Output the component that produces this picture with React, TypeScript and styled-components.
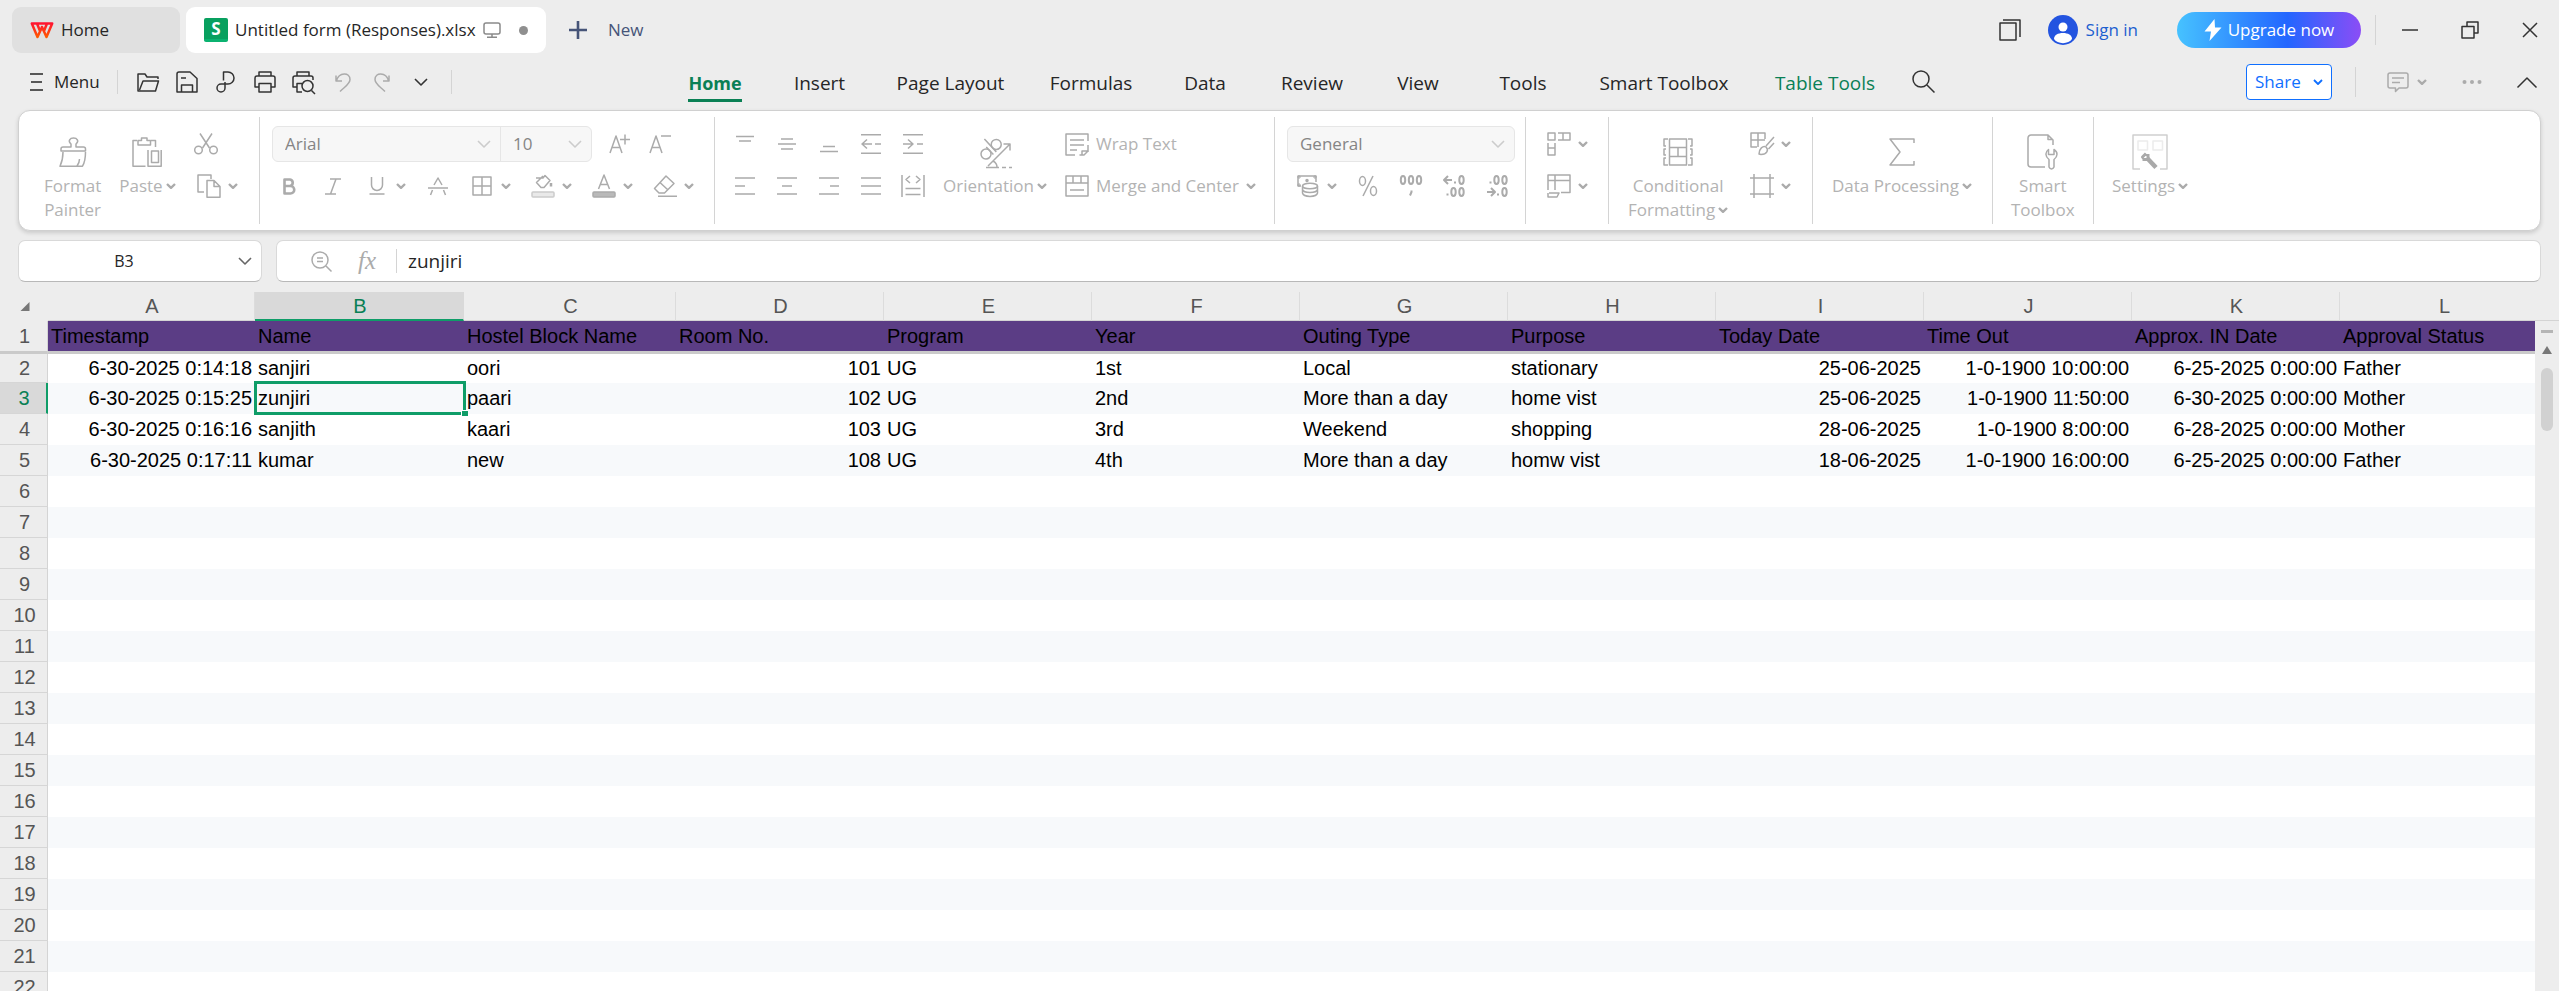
import React from "react";
import styled, { createGlobalStyle, css } from "styled-components";

const ui = `"Open Sans", "Noto Sans", sans-serif`;
const sheetFont = `"Liberation Sans", Arial, sans-serif`;

const c = {
  chrome: "#ededed",
  text: "#262626",
  faded: "#b3b3b3",
  fadedIcon: "#ababab",
  line: "#d4d4d4",
  green: "#0a8055",
  selection: "#0f9d68",
  blue: "#0f6fff",
  purple: "#5b3d85",
};

const GlobalStyle = createGlobalStyle`
  *, *::before, *::after { box-sizing: border-box; }
  body { margin: 0; background: ${c.chrome}; color: ${c.text}; font: 17px/24px ${ui}; }
  button, input, select { font: inherit; color: inherit; }
  button { border: 0; padding: 0; background: none; }
`;

/* ---------- icons ---------- */

const Drawing = styled.svg`
  display: block;
  flex: none;
  overflow: visible;
  fill: none;
  stroke: currentColor;
  stroke-linejoin: round;
`;

type IconProps = { w: number; h: number; d?: string; sw?: number; children?: React.ReactNode };
const Icon = ({ w, h, d, sw = 1.5, children }: IconProps) => (
  <Drawing width={w} height={h} viewBox={`0 0 ${w} ${h}`} strokeWidth={sw} aria-hidden="true">
    {d && <path d={d} />}
    {children}
  </Drawing>
);

const Caret = () => <Icon w={10} h={6} sw={2.4} d="M1 1L5 4.800L9 1" />;
const Chevron = () => <Icon w={14} h={8} sw={1.6} d="M1 1L7 7L13 1" />;

const icons = {
  painter: (
    <Icon w={28} h={30} d="M12 10V7C8.500 4 11 1 14.500 1S20.500 4 17 7V10H24.500A2 2 0 0 1 26.500 12V14H2V12A2 2 0 0 1 4 10ZM4 15C4 21 3 25 1 29.200H23.500C26 25 26.500 20 26.500 15M20.500 22C20.500 25 19.500 27 18 29" />
  ),
  paste: <Icon w={30} h={30} d="M5 3.500H1V29.200H13.500M19 3.500H23.500V10M6 8V3.500H9.500V1H15V3.500H18.500V8ZM16 13V29.200H29.200V13M19.500 14H26.500V25.500H19.500Z" />,
  cut: (
    <Icon w={24} h={22} d="M6 0.500L15.500 15M18 0.500L8.500 15">
      <circle cx="4.500" cy="17" r="3.800" />
      <circle cx="19.500" cy="17" r="3.800" />
    </Icon>
  ),
  copy: <Icon w={24} h={24} d="M7 18H1V1H14V5M10 6.500H17L23 12.500V23.200H10ZM17 6.500V12.500H23" />,
  grow: <Icon w={22} h={20} d="M1 19L7 2L13 19M3 13.500H11M11 5.500H21M16 0.500V10.500" />,
  shrink: <Icon w={22} h={20} d="M1 19L7 2L13 19M3 13.500H11M12 2H22" />,
  bold: <Icon w={12} h={17} sw={2.6} d="M1.500 1.500H7A3.300 3.300 0 0 1 7 8H1.500ZM1.500 8H7.500A3.700 3.700 0 0 1 7.500 15.500H1.500Z" />,
  italic: <Icon w={16} h={17} d="M5 1H16M0 16H11M11 1L5.500 16" />,
  underline: <Icon w={16} h={18} d="M2.500 0V8A5.500 5.500 0 0 0 13.500 8V0M0.500 17H15.500" />,
  strike: <Icon w={20} h={18} d="M0 11H20M6 8L10 1L14 8M4.500 13L2.500 18M15.500 13L17.500 18" />,
  borders: <Icon w={20} h={20} d="M1 1H19V19H1ZM10 1V19M1 10H19" />,
  fill: (
    <Icon w={24} h={24} d="M5 4H12L14 1.500L19 6.500L13 13.500H10L5.500 8.500L12 2">
      <path d="M20 9v3.500" strokeWidth="2.500" />
      <rect x="1" y="18" width="22" height="5" rx="1" fill="#e9e9e9" stroke="#cccccc" />
    </Icon>
  ),
  fontColor: (
    <Icon w={24} h={24} d="M6.500 15L12 1L17.500 15M8.500 10.500H15.500">
      <rect x="1" y="18" width="22" height="5" rx="1" fill="#b9b9b9" />
    </Icon>
  ),
  eraser: <Icon w={24} h={22} d="M13 1L21 8.500L11.500 18H6L1.500 13.500ZM7 7.500L15 15M5 21.200H24" />,
  alignTop: <Icon w={20} h={20} d="M1 2.500H19M4 7H16" />,
  alignMiddle: <Icon w={20} h={20} d="M4 5H16M1 10H19M4 15H16" />,
  alignBottom: <Icon w={20} h={20} d="M4 12.500H16M1 17.500H19" />,
  outdent: <Icon w={20} h={20} d="M0 0.800H20M0 19.200H20M6 5.500L1 10L6 14.500M1 10H11M14 10H20" />,
  indent: <Icon w={20} h={20} d="M0 0.800H20M0 19.200H20M5 5.500L10 10L5 14.500M0 10H10M14 10H20" />,
  alignLeft: <Icon w={20} h={18} d="M0 1H20M0 9H10M0 17H20" />,
  alignCenter: <Icon w={20} h={18} d="M0 1H20M5 9H15M0 17H20" />,
  alignRight: <Icon w={20} h={18} d="M0 1H20M11 9H20M0 17H20" />,
  justify: <Icon w={20} h={18} d="M0 1H20M0 9H20M0 17H20" />,
  distribute: <Icon w={24} h={22} d="M1 0V22M23 0V22M4.500 13.500H19.500M4.500 19.500H19.500M9 1L5 4.500L9 8M15 1L19 4.500L15 8" />,
  orientation: (
    <Icon w={34} h={34} d="M10 31L32 9M25.500 9H32V15.500M8 32.500H21M24 32.500H28M31 32.500H34M15 26C18.500 28 19 30 19 32">
      <g transform="translate(8 19) rotate(-43)">
        <circle cx="0" cy="0" r="5" />
        <path d="M5 -5V5.500M9 -12V5.500" />
        <circle cx="14" cy="0" r="5" />
      </g>
    </Icon>
  ),
  wrap: <Icon w={24} h={23} d="M10 22H1V1H23V8M23 12V19M15 22H17V18H23L19 22ZM5 7H19M5 12H19M5 17H12" />,
  merge: <Icon w={24} h={22} d="M1 1H23V21H1ZM1 8H23M8 1V8M16 1V8M5 15H19" />,
  currency: (
    <Icon w={22} h={22} d="M4 11H1V1H19V7">
      <circle cx="10" cy="5.500" r="1" fill="currentColor" />
      <path d="M1 1h2v2h-2zM17 1h2v2h-2zM1 9h2v2h-2z" strokeWidth="1" />
      <ellipse cx="13" cy="11" rx="7.500" ry="2.800" />
      <path d="M5.500 11V18C6.500 22.500 19.500 22.500 20.500 18V11M5.500 14.500C6.500 18.500 19.500 18.500 20.500 14.500" />
    </Icon>
  ),
  percent: (
    <Icon w={20} h={22} d="M15 1L5 21">
      <ellipse cx="4.500" cy="6" rx="3" ry="4.500" />
      <ellipse cx="15.500" cy="16" rx="3" ry="4.500" />
    </Icon>
  ),
  thousands: (
    <Icon w={22} h={22} d="M11.500 15.500V17L10 20.500" sw={2}>
      <ellipse cx="3" cy="5" rx="2.200" ry="4" />
      <ellipse cx="11" cy="5" rx="2.200" ry="4" />
      <ellipse cx="19" cy="5" rx="2.200" ry="4" />
    </Icon>
  ),
  addDecimal: (
    <Icon w={22} h={22} sw={2} d="M5 1L1 5L5 9M1 5H9M11 7.500H13M3.500 19.500H5.500">
      <ellipse cx="18.500" cy="5" rx="2.200" ry="4" />
      <ellipse cx="10.500" cy="17" rx="2.200" ry="4" />
      <ellipse cx="18.500" cy="17" rx="2.200" ry="4" />
    </Icon>
  ),
  dropDecimal: (
    <Icon w={22} h={22} sw={2} d="M5 13L9 17L5 21M1 17H9M11 19.500H13M3.500 7.500H5.500">
      <ellipse cx="10.500" cy="5" rx="2.200" ry="4" />
      <ellipse cx="18.500" cy="5" rx="2.200" ry="4" />
      <ellipse cx="18.500" cy="17" rx="2.200" ry="4" />
    </Icon>
  ),
  rowsCols: <Icon w={24} h={24} d="M1 1H8V8H1ZM11 1H23V8H11M16 1V8M1 11V23H8V11M1 16H8" />,
  worksheet: <Icon w={24} h={24} d="M1 16V1H23V18.500H14M1 6.500H23M8 1V16M2 19H12L10 23H1V19" />,
  conditional: <Icon w={30} h={28} d="M5 1H1V8H3M3 11H1V17H3M3 20H1V27H5M25 1H29V8H27M27 11H29V17H27M27 20H29V27H25M6.500 1H23.500V9.500H6.500ZM6.500 9.500V18.500M23.500 9.500V18.500M15 9.500V18.500M6.500 18.500H23.500V27H6.500Z" />,
  tableStyle: <Icon w={24} h={24} d="M7 15H1V1H15V7M1 8H15M8 1V15M24 5L16 14M24 11L18.500 17M9 22C9 17 13 13 16 15C19 18 17 22.500 11 22.500Z" />,
  format: <Icon w={24} h={24} d="M4 0V24M20 0V24M0 4H24M0 20H24" />,
  sigma: <Icon w={26} h={28} d="M25 5V1H1L11 14L1 27H25V23" />,
  smart: <Icon w={32} h={36} d="M18 33H4A3 3 0 0 1 1 30V4A3 3 0 0 1 4 1H21L26 6V11M21 1V5.500H26M22 33V25.500C18 22.500 18 18 21.500 15.500V20.500H27V15.500C31 18 31 22.500 27 25.500V33C26 35.500 23 35.500 22 33Z" />,
  settings: (
    <Icon w={36} h={36}>
      <path d="M8 35H1V1H35V35H28" stroke="#cfcfcf" />
      <path d="M6 7H15.500V16H6ZM21 7H30.500V16H21Z" stroke="#ececec" />
      <path d="M15 24L24 33.500" strokeWidth="4.500" stroke="#a9a9a9" />
      <path d="M14 19.500L10.500 23L13 26M16 20V25.500H10.500" strokeWidth="3" stroke="#a9a9a9" />
    </Icon>
  ),
  open: <Icon w={22} h={19} d="M21 6V4H10L8 1H1V18H18.500L21.500 8H6L2.500 17" />,
  save: <Icon w={22} h={22} d="M5 21H1V3A2 2 0 0 1 3 1H14L21 7.500V21H17M5.500 21V14H16.500V21ZM5 7H10" />,
  exportPdf: <Icon w={20} h={22} d="M7.500 9.500V1H12A6 6 0 0 1 12 13H5A4 4 0 1 0 9 17V11" />,
  print: <Icon w={22} h={22} d="M5 5V1H17V5M5 16H1V7A2 2 0 0 1 3 5H19A2 2 0 0 1 21 7V16H17M5 12.500H17V21H5Z" />,
  preview: (
    <Icon w={24} h={23} d="M5 5V1H17V5M5 16H1V7A2 2 0 0 1 3 5H19A2 2 0 0 1 21 7V9M10 12.500H5V21H10M19.500 19.500L23 23">
      <circle cx="15.500" cy="15" r="5.500" />
    </Icon>
  ),
  undo: <Icon w={16} h={20} d="M1 3.500V9H7M1.500 8.500C4 0 15 0 15 7.500C15 12 10 14.500 5 19.500" />,
  redo: <Icon w={16} h={20} d="M15 3.500V9H9M14.500 8.500C12 0 1 0 1 7.500C1 12 6 14.500 11 19.500" />,
  menu: <Icon w={13} h={18} d="M0 1H13M1 9H12M0 17H13" />,
  search: (
    <Icon w={23} h={24} d="M15 15L22.500 22.500">
      <circle cx="9" cy="9" r="8" />
    </Icon>
  ),
  stack: <Icon w={22} h={22} d="M1 4H17V21H1ZM4 1H21V18" />,
  minimise: <Icon w={16} h={16} d="M0 8H16" />,
  restore: <Icon w={18} h={18} d="M1 5.500H13V17H1ZM6 5V1H17V12H13.500" />,
  close: <Icon w={16} h={16} d="M1 1L15 15M15 1L1 15" />,
  comment: <Icon w={22} h={20} d="M3 1H19A2 2 0 0 1 21 3V14A2 2 0 0 1 19 16H12L8.500 19.500V16H3A2 2 0 0 1 1 14V3A2 2 0 0 1 3 1ZM5 6H17M5 10.500H13" />,
  more: (
    <Icon w={20} h={6}>
      <g fill="currentColor" stroke="none">
        <circle cx="2.500" cy="3" r="2" />
        <circle cx="10" cy="3" r="2" />
        <circle cx="17.500" cy="3" r="2" />
      </g>
    </Icon>
  ),
  collapse: <Icon w={20} h={11} d="M0.500 10.500L10 1L19.500 10.500" />,
  monitor: <Icon w={18} h={16} d="M3 1H15A2 2 0 0 1 17 3V10A2 2 0 0 1 15 12H3A2 2 0 0 1 1 10V3A2 2 0 0 1 3 1ZM9 12V15M4 15.200H14" />,
  plus: <Icon w={18} h={18} sw={2.6} d="M9 0V18M0 9H18" />,
  bolt: (
    <Icon w={18} h={22}>
      <path d="M10.500 0L0.500 12.500H7L5.500 22L17.500 8.500H11Z" fill="currentColor" stroke="none" />
    </Icon>
  ),
  avatar: (
    <Icon w={30} h={30}>
      <g stroke="none">
        <circle cx="15" cy="15" r="15" fill="#2354e0" />
        <circle cx="15" cy="12" r="4.500" fill="#fff" />
        <path d="M6 24C6 20 10 18 15 18S24 20 24 24C21 29.500 9 29.500 6 24Z" fill="#fff" />
      </g>
    </Icon>
  ),
  brand: (
    <Icon w={24} h={17}>
      <defs>
        <linearGradient id="brandFill" x1="0" y1="0" x2="0" y2="1">
          <stop offset="0" stopColor="#ff1430" />
          <stop offset="1" stopColor="#ff5a00" />
        </linearGradient>
      </defs>
      <path d="M1.800 1.500H22.200L16.500 15L12 5L7.500 15ZM7 1.500L10 9M17 1.500L14 9" stroke="url(#brandFill)" strokeWidth="2.500" />
    </Icon>
  ),
  zoomOut: (
    <Icon w={21} h={21} d="M15 15L20.500 20.500M6 7H12M6 10.500H12">
      <circle cx="9" cy="9" r="8" />
    </Icon>
  ),
  corner: (
    <Icon w={10} h={9}>
      <path d="M9.500 0V9H0.500Z" fill="#777" stroke="none" />
    </Icon>
  ),
  scrollUp: (
    <Icon w={10} h={8}>
      <path d="M5 0L10 8H0Z" fill="#777" stroke="none" />
    </Icon>
  ),
};

/* ---------- shell ---------- */

const Shell = styled.div`
  display: flex;
  flex-direction: column;
  height: 100vh;
  overflow: hidden;
`;

const TitleBar = styled.header`
  flex: none;
  display: flex;
  align-items: center;
  gap: 6px;
  height: 60px;
  padding: 0 21px 0 12px;
`;

const FileTab = styled.button<{ $active?: boolean; $width: number }>`
  display: flex;
  align-items: center;
  width: ${(p) => p.$width}px;
  height: 46px;
  padding: 0 18px;
  gap: 7px;
  border-radius: 9px;
  background: ${(p) => (p.$active ? "#fff" : "#e0e0e0")};
  white-space: nowrap;
  svg { color: #8a8a8a; }
`;

const SheetBadge = styled.span`
  display: flex;
  align-items: center;
  justify-content: center;
  width: 24px;
  height: 24px;
  border-radius: 2px;
  border-bottom: 3px solid #0bb270;
  background: #08a05f;
  color: #fff;
  font-weight: 700;
  line-height: 20px;
`;

const UnsavedDot = styled.span`
  width: 9px;
  height: 9px;
  margin: 0 0 0 auto;
  border-radius: 50%;
  background: #8f8f8f;
`;

const NewButton = styled.button`
  display: flex;
  align-items: center;
  gap: 21px;
  padding: 0 17px;
  color: #465478;
`;

const WindowTools = styled.div`
  display: flex;
  align-items: center;
  margin-left: auto;
`;

const SignIn = styled.button`
  display: flex;
  align-items: center;
  gap: 8px;
  margin: 0 39px 0 27px;
  color: #1d5fd0;
`;

const Upgrade = styled.button`
  display: flex;
  align-items: center;
  justify-content: center;
  gap: 6px;
  width: 184px;
  height: 36px;
  border-radius: 18px;
  background: linear-gradient(90deg, #46c2ff, #2366ff 60%, #8b4df6);
  color: #fff;
`;

const WindowButtons = styled.div`
  display: flex;
  align-items: center;
  gap: 43px;
  margin-left: 14px;
  padding-left: 26px;
  height: 30px;
  border-left: 1px solid ${c.line};
`;

const MenuBar = styled.nav`
  flex: none;
  display: grid;
  grid-template-columns: 1fr auto 1fr;
  align-items: center;
  height: 50px;
  padding-bottom: 6px;
`;

const QuickTools = styled.div`
  display: flex;
  align-items: center;
  padding-left: 30px;
`;

const MenuButton = styled.button`
  display: flex;
  align-items: center;
  gap: 11px;
  width: 87px;
  white-space: nowrap;
`;

const QuickRow = styled.div`
  display: flex;
  gap: 15px;
  padding: 0 18px;
  border: solid ${c.line};
  border-width: 0 1px;
`;

const Tabs = styled.div`
  display: flex;
`;

const Tab = styled.button<{ $width: number; $tone?: "active" | "accent" }>`
  display: flex;
  justify-content: center;
  width: ${(p) => p.$width}px;
  font-size: 19px;
  line-height: 26px;
  white-space: nowrap;
  padding-top: 8px;
  color: ${(p) => (p.$tone ? c.green : c.text)};
  ${(p) =>
    p.$tone === "active" &&
    css`
      font-size: 18px;
      font-weight: 700;
    `}
  span {
    padding-bottom: 3px;
    border-bottom: 3px solid ${(p) => (p.$tone === "active" ? c.green : "transparent")};
  }
`;

const MenuEnd = styled.div`
  display: flex;
  align-items: center;
  padding: 0 22px 0 14px;
`;

const ShareButton = styled.button`
  display: flex;
  align-items: center;
  justify-content: space-between;
  width: 86px;
  height: 36px;
  margin-left: auto;
  padding: 0 8px;
  border: 1px solid ${c.blue};
  border-radius: 4px;
  background: #fff;
  color: ${c.blue};
`;

const MenuTools = styled.div`
  display: flex;
  align-items: center;
  gap: 35px;
  height: 30px;
  margin-left: 23px;
  padding-left: 30px;
  border-left: 1px solid ${c.line};
  color: ${c.fadedIcon};
`;

/* ---------- ribbon ---------- */

const Ribbon = styled.section`
  flex: none;
  display: flex;
  height: 121px;
  margin: 0 18px;
  border: 1px solid #d0d0d0;
  border-radius: 12px;
  background: #fff;
  box-shadow: 0 2px 4px #00000026;
  color: ${c.faded};
`;

const Group = styled.div<{ $width?: number; $pad: number; $gap?: number }>`
  flex: none;
  display: flex;
  gap: ${(p) => p.$gap ?? 0}px;
  width: ${(p) => (p.$width ? `${p.$width}px` : "auto")};
  height: 107px;
  margin-top: 6px;
  padding: 9px 0 0 ${(p) => p.$pad}px;
  border-right: ${(p) => (p.$width ? `1px solid ${c.line}` : "0")};
`;

const Rows = styled.div`
  display: flex;
  flex-direction: column;
  gap: 6px;
`;

const ToolRow = styled.div<{ $gap?: number; $pad?: number }>`
  display: flex;
  align-items: center;
  gap: ${(p) => p.$gap ?? 0}px;
  height: 36px;
  padding-left: ${(p) => p.$pad ?? 0}px;
`;

const ToolButton = styled.button<{ $dim?: boolean }>`
  display: flex;
  align-items: center;
  gap: 7px;
  height: 24px;
  white-space: nowrap;
  color: ${(p) => (p.$dim ? c.fadedIcon : "#333")};
`;

const Glyph = styled.span`
  display: flex;
  align-items: center;
  justify-content: center;
  width: 24px;
`;

const LabelText = styled.span`
  color: ${c.faded};
`;

const BigButton = styled.button`
  display: flex;
  flex-direction: column;
  align-items: center;
  height: 98px;
  color: ${c.fadedIcon};
`;

const BigGlyph = styled.span`
  display: flex;
  align-items: center;
  justify-content: center;
  height: 48px;
  padding-top: 3px;
`;

const BigLabel = styled.span`
  display: flex;
  flex-direction: column;
  align-items: center;
  line-height: 24px;
  color: ${c.faded};
  white-space: nowrap;
  span {
    display: flex;
    align-items: center;
    gap: 3px;
  }
  svg { color: ${c.fadedIcon}; }
`;

const Picker = styled.div`
  display: flex;
  height: 36px;
  border: 1px solid #e6e6e6;
  border-radius: 6px;
  background: #f7f7f7;
  overflow: hidden;
`;

const PickerField = styled.label<{ $width: number }>`
  position: relative;
  display: flex;
  width: ${(p) => p.$width}px;
  & + & { border-left: 1px solid #e6e6e6; }
  select {
    flex: 1;
    appearance: none;
    border: 0;
    padding: 0 12px;
    background: transparent;
    color: #858585;
    opacity: 1;
  }
  svg {
    position: absolute;
    right: 9px;
    top: 13px;
    color: #cccccc;
  }
`;

type ToolProps = { icon: keyof typeof icons; name: string; caret?: boolean; label?: string };
const Tool = ({ icon, name, caret, label }: ToolProps) => (
  <ToolButton $dim disabled aria-label={name}>
    <Glyph>{icons[icon]}</Glyph>
    {label && <LabelText>{label}</LabelText>}
    {caret && <Caret />}
  </ToolButton>
);

type BigToolProps = { icon: keyof typeof icons; lines: string[]; caret?: boolean };
const BigTool = ({ icon, lines, caret }: BigToolProps) => (
  <BigButton disabled>
    <BigGlyph>{icons[icon]}</BigGlyph>
    <BigLabel>
      {lines.map((line, i) => (
        <span key={line}>
          {line}
          {caret && i === lines.length - 1 && <Caret />}
        </span>
      ))}
    </BigLabel>
  </BigButton>
);

/* ---------- formula bar ---------- */

const FormulaBar = styled.div`
  flex: none;
  display: flex;
  gap: 14px;
  height: 61px;
  padding: 9px 18px 10px;
`;

const Field = styled.div<{ $width?: number }>`
  ${(p) => (p.$width ? `width: ${p.$width}px;` : "flex: 1;")}
  display: flex;
  align-items: center;
  border: 1px solid #d9d9d9;
  border-bottom-color: #b8b8b8;
  border-radius: 7px;
  background: #fff;
  input {
    flex: 1;
    min-width: 0;
    height: 36px;
    border: 0;
    padding: 0 0 0 11px;
    outline: 0;
    background: none;
    font-size: 19px;
  }
`;

const NameInput = styled.input`
  && {
    padding: 0;
    text-align: center;
    font-size: 16px;
  }
`;

const NameArrow = styled.button`
  display: flex;
  justify-content: center;
  width: 32px;
  color: #666;
`;

const FormulaTools = styled.div`
  display: flex;
  align-items: center;
  gap: 26px;
  height: 24px;
  padding: 0 20px 0 34px;
  border-right: 1px solid ${c.line};
  color: ${c.fadedIcon};
`;

const FxButton = styled.button`
  font: italic 25px/24px "Liberation Serif", serif;
`;

/* ---------- grid ---------- */

const GridArea = styled.main`
  flex: 1;
  min-height: 0;
  display: flex;
  overflow: hidden;
`;

const SheetPane = styled.div`
  flex: 1;
  min-width: 0;
  overflow: hidden;
`;

const Sheet = styled.table`
  width: 0;
  min-width: 100%;
  table-layout: fixed;
  border-collapse: separate;
  border-spacing: 0;
  font: 20px/24px ${sheetFont};
  color: #000;
  th, td { white-space: nowrap; }
  th { padding: 0 0 0 2px; }
  td { padding: 0 3px 2px; }
`;

const ColumnHead = styled.th<{ $on?: boolean }>`
  height: 29px;
  font-weight: 400;
  border-bottom: ${(p) => (p.$on ? `2px solid ${c.selection}` : `1px solid ${c.line}`)};
  border-right: 1px solid ${(p) => (p.$on ? "#d9d9d9" : "#dcdcdc")};
  background: ${(p) => (p.$on ? "#d9d9d9" : c.chrome)};
  color: ${(p) => (p.$on ? c.green : "#555")};
`;

const Corner = styled.th`
  border-bottom: 1px solid ${c.chrome};
  svg { margin-left: 18px; }
`;

const RowHead = styled.th<{ $on?: boolean }>`
  font-weight: 400;
  border-bottom: 1px solid #d6d6d6;
  border-right: ${(p) => (p.$on ? `2px solid ${c.selection}` : `1px solid ${c.line}`)};
  background: ${(p) => (p.$on ? "#d9d9d9" : c.chrome)};
  color: ${(p) => (p.$on ? c.green : "#555")};
`;

const HeaderRow = styled.tr`
  height: 33px;
  td { padding-bottom: 0; background: ${c.purple}; }
  td, th { border-bottom: 3px solid #cacaca; }
`;

const Row = styled.tr<{ $first?: boolean; $band?: boolean }>`
  height: ${(p) => (p.$first ? 29 : 31)}px;
  td { background: ${(p) => (p.$band ? "#f7f9fb" : "#fff")}; }
`;

const Cell = styled.td<{ $right?: boolean }>`
  position: relative;
  text-align: ${(p) => (p.$right ? "right" : "left")};
`;

const Selection = styled.span`
  position: absolute;
  inset: -2px -2px -1px -1px;
  border: 3px solid ${c.selection};
  pointer-events: none;
  z-index: 1;
  &::after {
    content: "";
    position: absolute;
    right: -5px;
    bottom: -4px;
    width: 7px;
    height: 6px;
    border: solid #fff;
    border-width: 1px 0 0 1px;
    background: ${c.selection};
  }
`;

const ScrollRail = styled.div`
  flex: none;
  display: flex;
  flex-direction: column;
  align-items: center;
  width: 24px;
  background: ${c.chrome};
`;

const RailTop = styled.div`
  align-self: stretch;
  height: 29px;
  border-bottom: 1px solid ${c.line};
`;

const SplitHandle = styled.span`
  width: 12px;
  height: 3px;
  margin: 9px 0 13px;
  background: #b5b5b5;
`;

const Thumb = styled.span`
  width: 12px;
  height: 63px;
  margin-top: 14px;
  border-radius: 6px;
  background: #d1d1d1;
`;

/* ---------- data ---------- */

const tabs: { name: string; width: number; tone?: "active" | "accent" }[] = [
  { name: "Home", width: 107, tone: "active" },
  { name: "Insert", width: 102 },
  { name: "Page Layout", width: 160 },
  { name: "Formulas", width: 121 },
  { name: "Data", width: 107 },
  { name: "Review", width: 107 },
  { name: "View", width: 105 },
  { name: "Tools", width: 105 },
  { name: "Smart Toolbox", width: 177 },
  { name: "Table Tools", width: 145, tone: "accent" },
];

const columns: { id: string; width: number; title: string; right?: boolean }[] = [
  { id: "A", width: 207, title: "Timestamp", right: true },
  { id: "B", width: 209, title: "Name" },
  { id: "C", width: 212, title: "Hostel Block Name" },
  { id: "D", width: 208, title: "Room No.", right: true },
  { id: "E", width: 208, title: "Program" },
  { id: "F", width: 208, title: "Year" },
  { id: "G", width: 208, title: "Outing Type" },
  { id: "H", width: 208, title: "Purpose" },
  { id: "I", width: 208, title: "Today Date", right: true },
  { id: "J", width: 208, title: "Time Out", right: true },
  { id: "K", width: 208, title: "Approx. IN Date", right: true },
  { id: "L", width: 208, title: "Approval Status" },
];

const records = [
  ["6-30-2025 0:14:18", "sanjiri", "oori", "101", "UG", "1st", "Local", "stationary", "25-06-2025", "1-0-1900 10:00:00", "6-25-2025 0:00:00", "Father"],
  ["6-30-2025 0:15:25", "zunjiri", "paari", "102", "UG", "2nd", "More than a day", "home vist", "25-06-2025", "1-0-1900 11:50:00", "6-30-2025 0:00:00", "Mother"],
  ["6-30-2025 0:16:16", "sanjith", "kaari", "103", "UG", "3rd", "Weekend", "shopping", "28-06-2025", "1-0-1900 8:00:00", "6-28-2025 0:00:00", "Mother"],
  ["6-30-2025 0:17:11", "kumar", "new", "108", "UG", "4th", "More than a day", "homw vist", "18-06-2025", "1-0-1900 16:00:00", "6-25-2025 0:00:00", "Father"],
];

const rowNumbers = Array.from({ length: 21 }, (_, i) => i + 2);

const quick: { icon: keyof typeof icons; name: string; dim?: boolean }[] = [
  { icon: "open", name: "Open" },
  { icon: "save", name: "Save" },
  { icon: "exportPdf", name: "Export to PDF" },
  { icon: "print", name: "Print" },
  { icon: "preview", name: "Print preview" },
  { icon: "undo", name: "Undo", dim: true },
  { icon: "redo", name: "Redo", dim: true },
];

/* ---------- page ---------- */

const Title = () => (
  <TitleBar>
    <FileTab $width={168}>
      {icons.brand}
      Home
    </FileTab>
    <FileTab $active $width={360}>
      <SheetBadge>S</SheetBadge>
      Untitled form (Responses).xlsx
      {icons.monitor}
      <UnsavedDot />
    </FileTab>
    <NewButton>
      {icons.plus}
      New
    </NewButton>
    <WindowTools>
      <ToolButton aria-label="Open windows">{icons.stack}</ToolButton>
      <SignIn>
        {icons.avatar}
        Sign in
      </SignIn>
      <Upgrade>
        {icons.bolt}
        Upgrade now
      </Upgrade>
      <WindowButtons>
        <ToolButton aria-label="Minimise">{icons.minimise}</ToolButton>
        <ToolButton aria-label="Restore">{icons.restore}</ToolButton>
        <ToolButton aria-label="Close">{icons.close}</ToolButton>
      </WindowButtons>
    </WindowTools>
  </TitleBar>
);

const Menu = () => (
  <MenuBar>
    <QuickTools>
      <MenuButton>
        {icons.menu}
        Menu
      </MenuButton>
      <QuickRow>
        {quick.map((q) => (
          <ToolButton key={q.name} aria-label={q.name} $dim={q.dim} disabled={q.dim}>
            <Glyph>{icons[q.icon]}</Glyph>
          </ToolButton>
        ))}
        <ToolButton aria-label="More quick tools">
          <Glyph>
            <Chevron />
          </Glyph>
        </ToolButton>
      </QuickRow>
    </QuickTools>
    <Tabs>
      {tabs.map((t) => (
        <Tab key={t.name} $width={t.width} $tone={t.tone}>
          <span>{t.name}</span>
        </Tab>
      ))}
    </Tabs>
    <MenuEnd>
      <ToolButton aria-label="Search">{icons.search}</ToolButton>
      <ShareButton>
        Share
        <Icon w={10} h={6} sw={1.8} d="M1 1L5 5L9 1" />
      </ShareButton>
      <MenuTools>
        <Tool icon="comment" name="Comments" caret />
        <ToolButton $dim aria-label="More">{icons.more}</ToolButton>
        <ToolButton aria-label="Collapse ribbon">{icons.collapse}</ToolButton>
      </MenuTools>
    </MenuEnd>
  </MenuBar>
);

const HomeRibbon = () => (
  <Ribbon aria-label="Home ribbon">
    <Group $width={241} $pad={25} $gap={18}>
      <BigTool icon="painter" lines={["Format", "Painter"]} />
      <BigTool icon="paste" lines={["Paste"]} caret />
      <Rows>
        <ToolRow>
          <Tool icon="cut" name="Cut" />
        </ToolRow>
        <ToolRow $pad={3}>
          <Tool icon="copy" name="Copy" caret />
        </ToolRow>
      </Rows>
    </Group>
    <Group $width={455} $pad={12}>
      <Rows>
        <ToolRow $gap={16}>
          <Picker>
            <PickerField $width={227}>
              <select disabled aria-label="Font">
                <option>Arial</option>
              </select>
              <Chevron />
            </PickerField>
            <PickerField $width={91}>
              <select disabled aria-label="Font size">
                <option>10</option>
              </select>
              <Chevron />
            </PickerField>
          </Picker>
          <Tool icon="grow" name="Increase font size" />
          <Tool icon="shrink" name="Decrease font size" />
        </ToolRow>
        <ToolRow $gap={20} $pad={5}>
          <Tool icon="bold" name="Bold" />
          <Tool icon="italic" name="Italic" />
          <Tool icon="underline" name="Underline" caret />
          <Tool icon="strike" name="Strikethrough" />
          <Tool icon="borders" name="Borders" caret />
          <Tool icon="fill" name="Fill colour" caret />
          <Tool icon="fontColor" name="Font colour" caret />
          <Tool icon="eraser" name="Clear" caret />
        </ToolRow>
      </Rows>
    </Group>
    <Group $width={560} $pad={18} $gap={18}>
      <Rows>
        <ToolRow $gap={18}>
          <Tool icon="alignTop" name="Align top" />
          <Tool icon="alignMiddle" name="Align middle" />
          <Tool icon="alignBottom" name="Align bottom" />
          <Tool icon="outdent" name="Decrease indent" />
          <Tool icon="indent" name="Increase indent" />
        </ToolRow>
        <ToolRow $gap={18}>
          <Tool icon="alignLeft" name="Align left" />
          <Tool icon="alignCenter" name="Align centre" />
          <Tool icon="alignRight" name="Align right" />
          <Tool icon="justify" name="Justify" />
          <Tool icon="distribute" name="Distribute" />
        </ToolRow>
      </Rows>
      <BigTool icon="orientation" lines={["Orientation"]} caret />
      <Rows>
        <ToolRow>
          <Tool icon="wrap" name="Wrap Text" label="Wrap Text" />
        </ToolRow>
        <ToolRow>
          <Tool icon="merge" name="Merge and Center" label="Merge and Center" caret />
        </ToolRow>
      </Rows>
    </Group>
    <Group $width={251} $pad={12}>
      <Rows>
        <Picker>
          <PickerField $width={226}>
            <select disabled aria-label="Number format">
              <option>General</option>
            </select>
            <Chevron />
          </PickerField>
        </Picker>
        <ToolRow $gap={19} $pad={9}>
          <Tool icon="currency" name="Currency" caret />
          <Tool icon="percent" name="Percent" />
          <Tool icon="thousands" name="Thousands separator" />
          <Tool icon="addDecimal" name="Increase decimal" />
          <Tool icon="dropDecimal" name="Decrease decimal" />
        </ToolRow>
      </Rows>
    </Group>
    <Group $width={83} $pad={21}>
      <Rows>
        <ToolRow>
          <Tool icon="rowsCols" name="Rows and columns" caret />
        </ToolRow>
        <ToolRow>
          <Tool icon="worksheet" name="Worksheet" caret />
        </ToolRow>
      </Rows>
    </Group>
    <Group $width={204} $pad={19} $gap={22}>
      <BigTool icon="conditional" lines={["Conditional", "Formatting"]} caret />
      <Rows>
        <ToolRow>
          <Tool icon="tableStyle" name="Table style" caret />
        </ToolRow>
        <ToolRow>
          <Tool icon="format" name="Format" caret />
        </ToolRow>
      </Rows>
    </Group>
    <Group $width={180} $pad={19}>
      <BigTool icon="sigma" lines={["Data Processing"]} caret />
    </Group>
    <Group $width={101} $pad={18}>
      <BigTool icon="smart" lines={["Smart", "Toolbox"]} />
    </Group>
    <Group $pad={18}>
      <BigTool icon="settings" lines={["Settings"]} caret />
    </Group>
  </Ribbon>
);

const Grid = () => (
  <GridArea>
    <SheetPane>
      <Sheet>
        <colgroup>
          <col width={48} />
          {columns.map((col) => (
            <col key={col.id} width={col.width} />
          ))}
        </colgroup>
        <thead>
          <tr>
            <Corner aria-label="Select all">{icons.corner}</Corner>
            {columns.map((col) => (
              <ColumnHead key={col.id} scope="col" $on={col.id === "B"}>
                {col.id}
              </ColumnHead>
            ))}
          </tr>
        </thead>
        <tbody>
          <HeaderRow>
            <RowHead scope="row">1</RowHead>
            {columns.map((col) => (
              <Cell key={col.id}>{col.title}</Cell>
            ))}
          </HeaderRow>
          {rowNumbers.map((n) => (
            <Row key={n} $first={n === 2} $band={n % 2 === 1}>
              <RowHead scope="row" $on={n === 3}>
                {n}
              </RowHead>
              {columns.map((col, i) => (
                <Cell key={col.id} $right={col.right}>
                  {records[n - 2]?.[i]}
                  {n === 3 && col.id === "B" && <Selection />}
                </Cell>
              ))}
            </Row>
          ))}
        </tbody>
      </Sheet>
    </SheetPane>
    <ScrollRail>
      <RailTop />
      <SplitHandle />
      {icons.scrollUp}
      <Thumb />
    </ScrollRail>
  </GridArea>
);

export default function App() {
  return (
    <Shell>
      <GlobalStyle />
      <Title />
      <Menu />
      <HomeRibbon />
      <FormulaBar>
        <Field $width={244}>
          <NameInput type="text" aria-label="Name box" defaultValue="B3" />
          <NameArrow aria-label="Named ranges">
            <Chevron />
          </NameArrow>
        </Field>
        <Field>
          <FormulaTools>
            <ToolButton $dim aria-label="Zoom out formula">{icons.zoomOut}</ToolButton>
            <FxButton aria-label="Insert function">fx</FxButton>
          </FormulaTools>
          <input type="text" aria-label="Formula" defaultValue="zunjiri" />
        </Field>
      </FormulaBar>
      <Grid />
    </Shell>
  );
}
